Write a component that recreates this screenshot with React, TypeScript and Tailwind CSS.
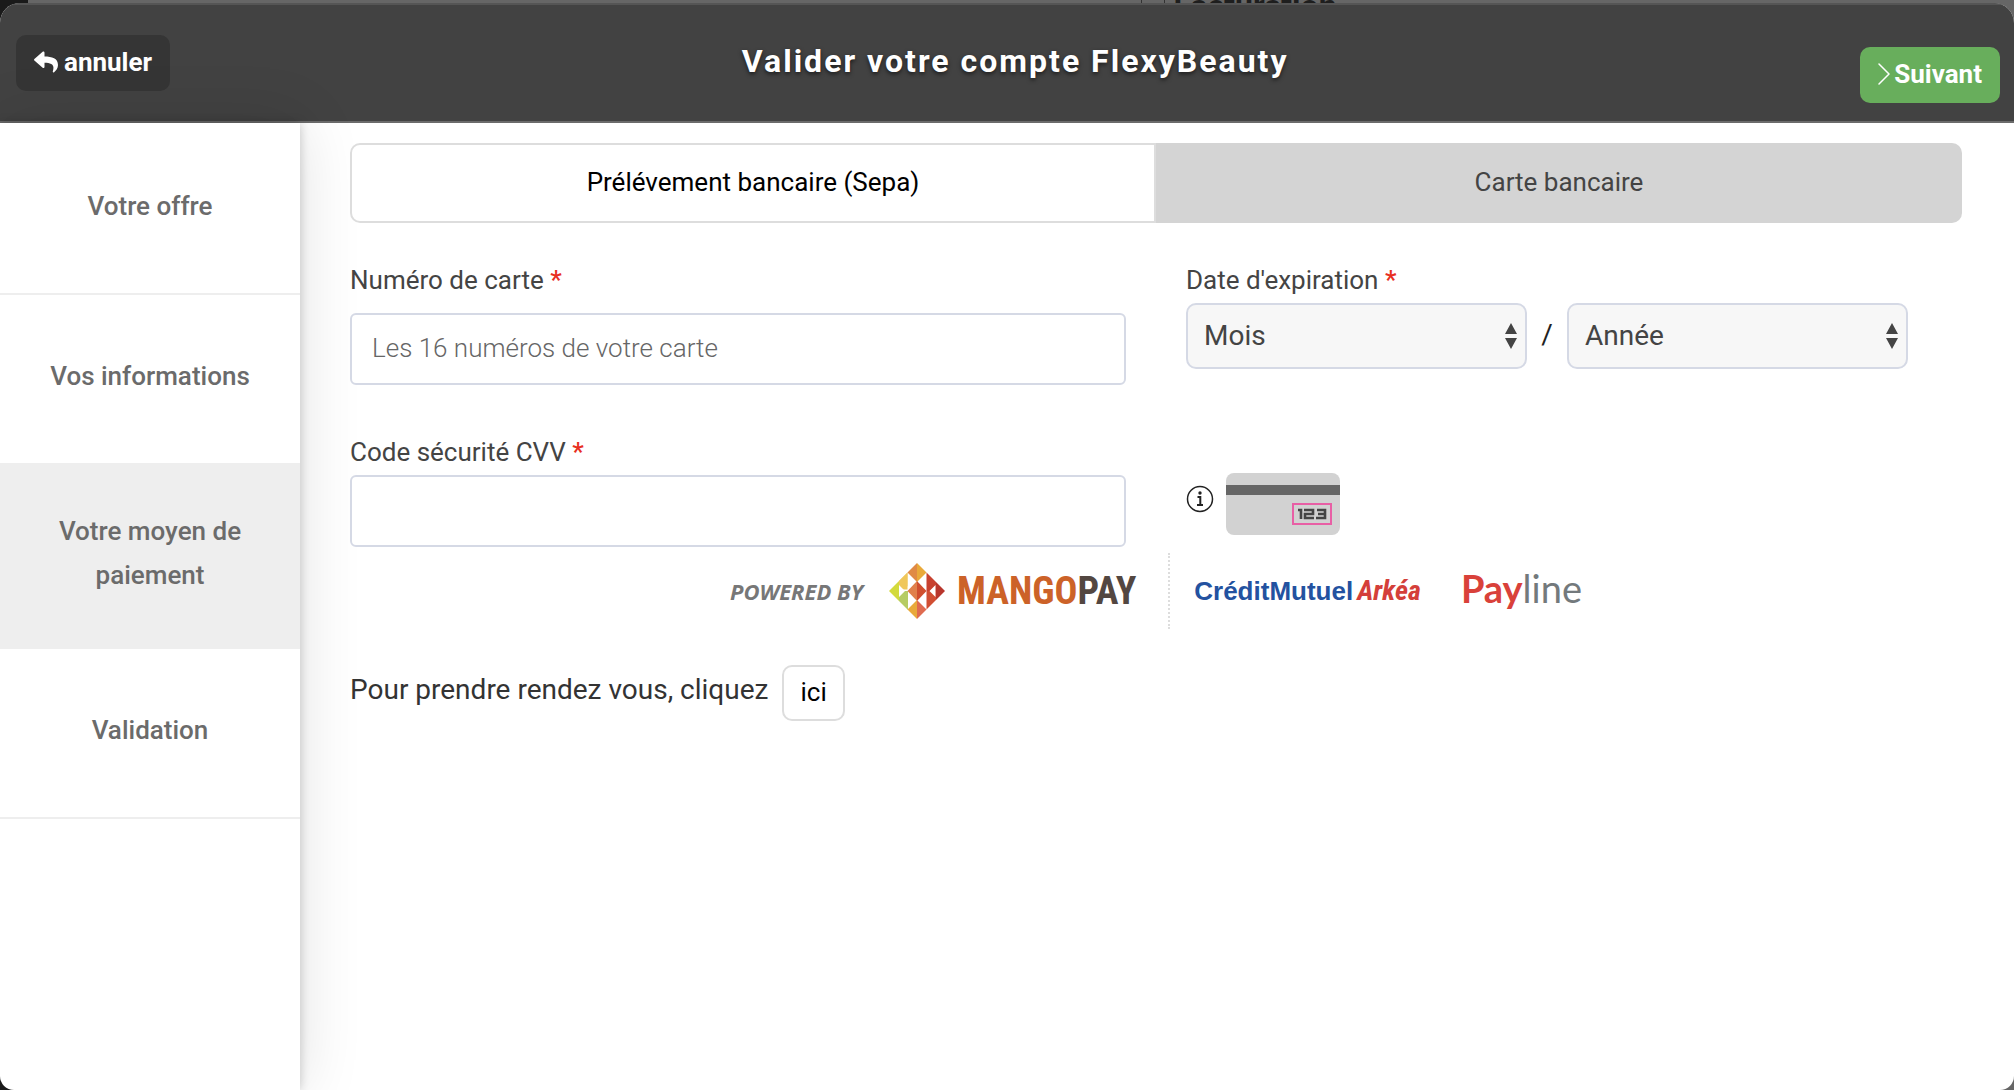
import { useState } from 'react';
import { FaReply } from 'react-icons/fa';

const steps = ['Votre offre', 'Vos informations', 'Votre moyen de paiement', 'Validation'];

const months = ['01', '02', '03', '04', '05', '06', '07', '08', '09', '10', '11', '12'];
const years = ['2020', '2021', '2022', '2023', '2024', '2025', '2026', '2027'];

function Label({ htmlFor, children }: { htmlFor: string; children: React.ReactNode }) {
  return (
    <label htmlFor={htmlFor} className="block text-[26px] leading-8 text-[#444]">
      {children} <span className="text-[#e8301f] font-medium">*</span>
    </label>
  );
}

interface SelectProps {
  id: string;
  placeholder: string;
  options: string[];
  value: string;
  onChange: (value: string) => void;
}

function Select({ id, placeholder, options, value, onChange }: SelectProps) {
  return (
    <div className="relative flex-1">
      <select
        id={id}
        aria-label={placeholder}
        value={value}
        onChange={(e) => onChange(e.target.value)}
        className="block w-full h-[66px] pl-4 pr-10 appearance-none rounded-[10px] border-2 border-[#d5d9e5] bg-[#f7f7f7] text-[28px] text-[#444]"
      >
        <option value="">{placeholder}</option>
        {options.map((option) => (
          <option key={option} value={option}>{option}</option>
        ))}
      </select>
      <svg className="absolute right-2.5 top-5 w-3 h-[26px] pointer-events-none" viewBox="0 0 12 26" fill="#444">
        <path d="M6 0 12 11H0zM0 15h12L6 26z" />
      </svg>
    </div>
  );
}

function ChevronIcon() {
  return (
    <svg className="w-3 h-[22px]" viewBox="0 0 12 22" fill="none" stroke="currentColor">
      <path d="M1 1l10 10L1 21" strokeWidth="1.500" strokeLinecap="round" strokeLinejoin="round" />
    </svg>
  );
}

function CardBackIcon() {
  return (
    <svg className="w-[114px] h-[62px]" viewBox="0 0 114 62">
      <rect width="114" height="62" rx="8" fill="#d2d2d2" />
      <rect y="12" width="114" height="10" fill="#666" />
      <rect x="67" y="31" width="38" height="20" fill="none" stroke="#e85fa5" strokeWidth="2" />
      <g fill="none" stroke="#444" strokeWidth="2.6">
        <path d="M72 37h3v9" />
        <path d="M78 37h9v4h-8v4h9" />
        <path d="M91 37h8v8h-9M92 41h7" />
      </g>
    </svg>
  );
}

function MangopayMark() {
  return (
    <svg className="w-14 h-14" viewBox="0 0 56 56">
      {/* top */}
      <path d="M28 0v19L18.500 9.500z" fill="#e08a45" />
      <path d="M28 0v19l9.500-9.500z" fill="#e9a93a" />
      {/* left */}
      <path d="M18.500 9.500v14L10 18z" fill="#f0c75a" />
      <path d="M18.500 9.500v17H10V18z" fill="#f0c75a" />
      <path d="M10 18v20L0 28z" fill="#d3da3c" />
      <path d="M10 28h9v19L10 38z" fill="#b6cc63" />
      <path d="M10 34V22l6 6zM19 14v12l6-9zM19 42V30l6 9z" fill="#fff" />
      {/* centre */}
      <path d="M28 18v20L18.500 28z" fill="#e0804a" />
      <path d="M28 18v20l9.500-10z" fill="#d04f2e" />
      {/* right */}
      <path d="M37.500 9.500 47 19v9H37.500z" fill="#c8412f" />
      <path d="M47 19l9 9-9 9z" fill="#b8362c" />
      <path d="M37.500 28H47v9l-9.500 9.500z" fill="#d14e32" />
      <path d="M46.500 22v12l-6-6zM37 14v12l-6-9zM37 42V30l-6 9z" fill="#fff" />
      {/* bottom */}
      <path d="M28 37v19L18.500 46.500z" fill="#e9a93a" />
      <path d="M28 37v19l9.500-9.500z" fill="#df6b50" />
    </svg>
  );
}

function InfoIcon() {
  return (
    <svg className="w-7 h-7" viewBox="0 0 28 28" fill="none" stroke="#222">
      <circle cx="14" cy="14" r="12.500" strokeWidth="1.500" />
      <circle cx="14" cy="8" r="1.700" fill="#222" stroke="none" />
      <path d="M11.500 12h2.800v8M11 20h6" strokeWidth="2" />
    </svg>
  );
}

export default function App() {
  const [method, setMethod] = useState<'sepa' | 'card'>('card');
  const [cardNumber, setCardNumber] = useState('');
  const [cvv, setCvv] = useState('');
  const [month, setMonth] = useState('');
  const [year, setYear] = useState('');

  return (
    <div className="min-h-screen flex flex-col bg-[linear-gradient(90deg,#1a1a1a_28px,#666_28px)] font-['Roboto',sans-serif]">
      {/* Page behind the modal, only a sliver of it shows */}
      <div className="h-[3px] overflow-hidden flex justify-center pl-[464px]">
        <div className="flex items-start gap-[22px] text-[#1e1e1e]">
          <span className="w-px h-[3px] bg-[#333]" />
          <span className="w-px h-[3px] bg-[#333]" />
          <span className="-mt-2.5 -ml-3.5 text-[32px] leading-8 font-bold">Facturation</span>
        </div>
      </div>

      <div className="flex-1 flex flex-col rounded-t-[20px] rounded-b-[14px] overflow-hidden bg-white">
        {/* Header */}
        <header className="h-[120px] shrink-0 flex items-start justify-between pl-4 pr-3.5 bg-[#424242] border-t-2 border-t-[#555] border-b-2 border-b-[#6b6b6b]">
          <button className="mt-[30px] h-14 px-[18px] pb-0.5 flex items-center gap-1.5 rounded-[10px] bg-[#353535] text-white text-[26px] font-bold">
            <FaReply className="w-6 h-6" />
            annuler
          </button>
          <h1 className="mt-9 text-[32px] leading-10 font-bold tracking-[2px] text-white [text-shadow:0_2px_4px_rgba(0,0,0,0.6)]">
            Valider votre compte FlexyBeauty
          </h1>
          <button className="mt-[42px] h-14 px-[18px] pb-0.5 flex items-center gap-1 rounded-[10px] bg-[#68ae5c] text-white text-[26px] font-bold">
            <ChevronIcon />
            Suivant
          </button>
        </header>

        <div className="flex-1 flex">
          {/* Steps */}
          <nav className="w-[300px] shrink-0 pt-0.5 shadow-[0_0_10px_rgba(0,0,0,0.2),0_0_60px_rgba(0,0,0,0.12)]">
            {steps.map((step, index) => (
              <a
                key={step}
                href="#"
                className={`min-h-[170px] pt-11 pb-[50px] px-10 flex items-center justify-center text-center text-[26px] leading-[44px] font-medium text-[#6b6b6b] border-b-2 border-[#eee] ${
                  index === 2 ? 'bg-[#eee]' : 'bg-white'
                }`}
              >
                {step}
              </a>
            ))}
          </nav>

          {/* Payment form */}
          <main className="flex-1 pt-5 pl-[50px] pr-[52px]">
            <div className="grid grid-cols-2 h-20 text-[26px]">
              <button
                onClick={() => setMethod('sepa')}
                aria-pressed={method === 'sepa'}
                className="pb-0.5 rounded-l-[10px] border-2 border-[#ddd] bg-white text-black"
              >
                Prélévement bancaire (Sepa)
              </button>
              <button
                onClick={() => setMethod('card')}
                aria-pressed={method === 'card'}
                className="pb-0.5 rounded-r-[10px] bg-[#d4d4d4] text-[#444]"
              >
                Carte bancaire
              </button>
            </div>

            <div className="mt-[41px] grid grid-cols-2 gap-x-[60px]">
              <div>
                <Label htmlFor="card-number">Numéro de carte</Label>
                <input
                  id="card-number"
                  value={cardNumber}
                  onChange={(e) => setCardNumber(e.target.value)}
                  placeholder="Les 16 numéros de votre carte"
                  className="mt-[17px] block w-full h-[72px] px-5 pb-0.5 rounded-md border-2 border-[#d5d9e5] bg-white text-[26px] font-light text-[#444] placeholder:text-[#666]"
                />
              </div>
              <div>
                <Label htmlFor="month">Date d'expiration</Label>
                <div className="mt-[7px] pr-[54px] flex items-center text-[28px] leading-10 text-[#222]">
                  <Select id="month" placeholder="Mois" options={months} value={month} onChange={setMonth} />
                  <span className="w-10 pb-0.5 text-center">/</span>
                  <Select id="year" placeholder="Année" options={years} value={year} onChange={setYear} />
                </div>
              </div>
            </div>

            <div className="mt-[51px] grid grid-cols-2 gap-x-[60px]">
              <div>
                <Label htmlFor="cvv">Code sécurité CVV</Label>
                <input
                  id="cvv"
                  value={cvv}
                  onChange={(e) => setCvv(e.target.value)}
                  className="mt-[7px] block w-full h-[72px] px-5 rounded-md border-2 border-[#d5d9e5] bg-white text-[26px] font-light text-[#444]"
                />
              </div>
              <div className="pt-[37px] flex items-start gap-3">
                <div className="pt-3">
                  <InfoIcon />
                </div>
                <CardBackIcon />
              </div>
            </div>

            {/* Payment partners */}
            <div className="mt-2 h-[76px] pb-1 flex items-center justify-center whitespace-nowrap leading-none font-bold">
              <span className="font-['Open_Sans',sans-serif] text-[22px] italic text-[#777]">POWERED BY</span>
              <span className="ml-[26px]">
                <MangopayMark />
              </span>
              <span className="ml-3 font-['Roboto_Condensed','Roboto',sans-serif] text-[38px] text-[#cc6228]">
                MANGO<span className="text-[#534741]">PAY</span>
              </span>
              <span className="ml-8 h-[76px] border-l-2 border-dotted border-[#ddd]" />
              <span className="ml-6 font-['Liberation_Sans',sans-serif] text-[26px] text-[#2352a0]">
                CréditMutuel
              </span>
              <span className="ml-1 font-['Roboto_Condensed','Roboto',sans-serif] text-[28px] italic text-[#d43f3a]">
                Arkéa
              </span>
              <span className="ml-10 pb-1.5 font-['Lato',sans-serif] text-[38px] text-[#d9413a]">
                Pay<span className="font-normal text-[#73797c]">line</span>
              </span>
            </div>

            <div className="mt-[34px] flex items-start gap-3.5 text-[28px] text-[#333]">
              <p className="mt-[5px] leading-10">Pour prendre rendez vous, cliquez</p>
              <button className="h-14 px-4 pb-0.5 rounded-[10px] border-2 border-[#ddd] bg-white text-[26px] text-black">ici</button>
            </div>
          </main>
        </div>
      </div>
    </div>
  );
}
